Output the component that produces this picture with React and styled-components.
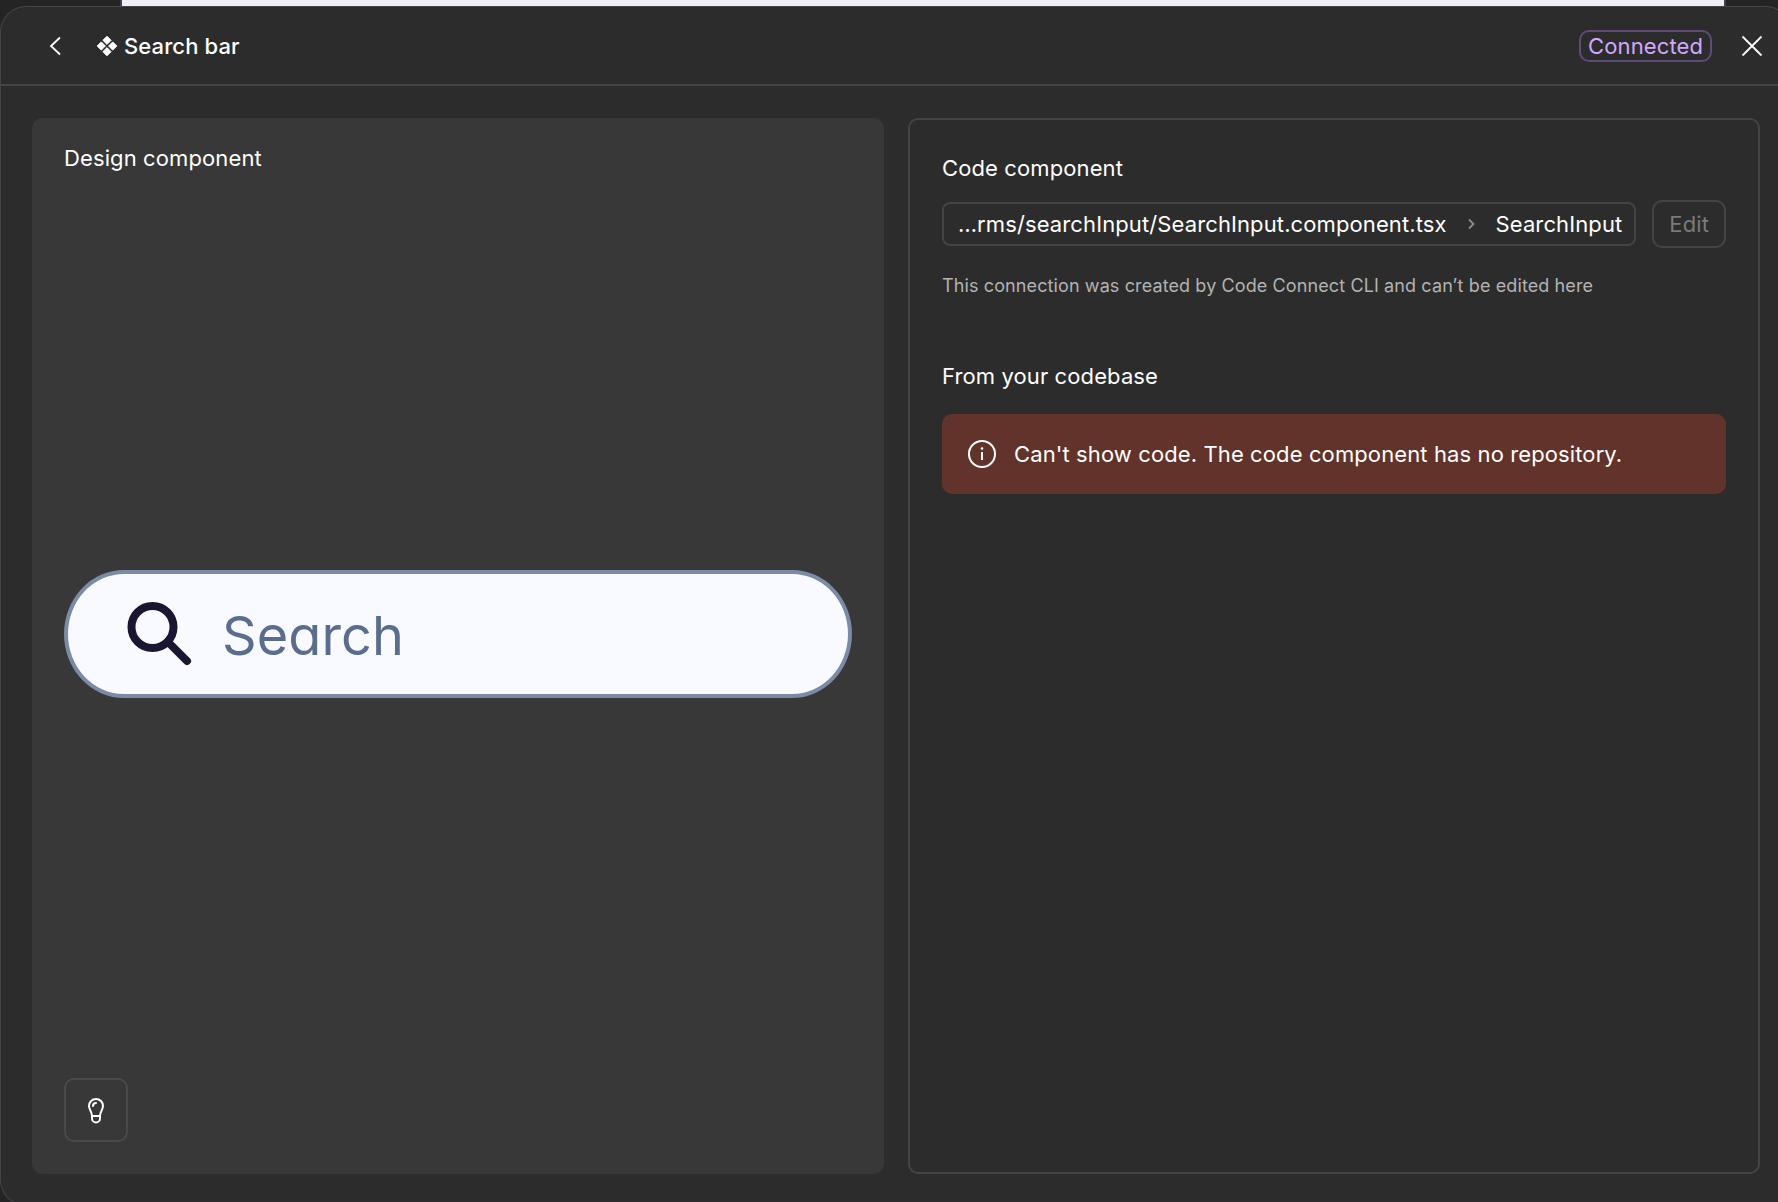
import React from "react";
import styled, { createGlobalStyle } from "styled-components";

const GlobalStyle = createGlobalStyle`
  *, *::before, *::after { box-sizing: border-box; }
  html, body, #root { height: 100%; }
  body {
    margin: 0;
    overflow: hidden;
    background: #1e1e1e;
    color: #ffffff;
    font-family: Inter, "Liberation Sans", sans-serif;
    font-size: 22px;
    line-height: 32px;
    letter-spacing: 0.005em;
  }
  button, input { font: inherit; letter-spacing: inherit; margin: 0; }
  h1, h2, p { margin: 0; font-size: inherit; font-weight: 400; }
`;

const Page = styled.div`
  display: flex;
  flex-direction: column;
  height: 100%;
  background: #242424;
`;

const CanvasStrip = styled.div`
  flex: none;
  height: 6px;
  margin: 0 52px 0 120px;
  background: #f0eff7;
  border: solid #444444;
  border-width: 0 2px;
`;

/* The dialog runs slightly past the right and bottom edges of the window. */
const Dialog = styled.section`
  flex: 1;
  display: flex;
  flex-direction: column;
  margin: 0 -14px -4px 0;
  background: #2c2c2c;
  border-radius: 26px;
  box-shadow: inset 0 0 0 1px #444444;
`;

const Header = styled.header`
  flex: none;
  display: flex;
  align-items: center;
  height: 80px;
  padding: 2px 16px 0 32px;
  border-bottom: 2px solid #444444;
`;

const IconButton = styled.button`
  display: grid;
  place-items: center;
  width: 48px;
  height: 48px;
  padding: 0;
  border: 0;
  border-radius: 10px;
  background: none;
  color: #ffffff;
`;

const Title = styled.h1`
  display: flex;
  align-items: center;
  gap: 6px;
  flex: 1;
  margin-left: 16px;

  && { font-weight: 500; }
`;

const Badge = styled.span`
  height: 32px;
  margin-right: 16px;
  padding: 0 7px;
  border: 2px solid #5e4b76;
  border-radius: 10px;
  color: #d1a8ff;
  line-height: 28px;
`;

const Columns = styled.div`
  flex: 1;
  display: grid;
  grid-template-columns: repeat(2, minmax(0, 1fr));
  gap: 24px;
  padding: 32px;
`;

const DesignPanel = styled.section`
  display: flex;
  flex-direction: column;
  justify-content: space-between;
  padding: 24px 32px 32px;
  border-radius: 10px;
  background: #383838;
`;

const DesignTitle = styled.h2`
  && { margin-bottom: 16px; }
`;

const SearchPreview = styled.label`
  display: flex;
  align-items: center;
  gap: 28px;
  height: 128px;
  padding: 0 58px;
  border: 4px solid #7b8aa5;
  border-radius: 60px / 64px;
  background: #f9faff;
`;

const SearchField = styled.input`
  flex: 1;
  min-width: 0;
  padding: 4px 0 0;
  border: 0;
  outline: 0;
  background: none;
  color: #5a6d8c;
  font-size: 54px;
  line-height: 64px;
  font-feature-settings: "cv11";

  &::placeholder { color: #5a6d8c; opacity: 1; }
`;

const HintButton = styled(IconButton)`
  width: 64px;
  height: 64px;
  border: 2px solid #4a4a4a;
`;

const CodePanel = styled.section`
  padding: 32px;
  border: 2px solid #444444;
  border-radius: 10px;
`;

const ConnectionRow = styled.div`
  display: flex;
  align-items: center;
  gap: 16px;
  margin: 16px 0 24px;
`;

const PathBox = styled.div`
  flex: 1;
  display: flex;
  align-items: center;
  justify-content: space-between;
  height: 44px;
  padding: 0 12px 0 14px;
  border: 2px solid #444444;
  border-radius: 8px;
  white-space: nowrap;
`;

const EditButton = styled.button`
  height: 48px;
  padding: 0 15px;
  border: 2px solid #444444;
  border-radius: 10px;
  background: none;
  color: #7a7a7a;
`;

const Note = styled.p`
  color: #b3b3b3;
  font-size: 18px;
  line-height: 28px;
`;

const CodebaseTitle = styled.h2`
  && { margin: 60px 0 22px; }
`;

const Alert = styled.div`
  display: flex;
  align-items: center;
  gap: 16px;
  height: 80px;
  padding: 0 24px;
  border-radius: 10px;
  background: #61332b;
`;

export default function App() {
  return (
    <>
      <GlobalStyle />
      <Page>
        <CanvasStrip />
        <Dialog aria-label="Search bar">
          <Header>
            <IconButton aria-label="Back">
              <svg width="20" height="24" viewBox="0 0 20 24" fill="none" stroke="currentColor" strokeWidth="1.8">
                <path d="M14 3.500L5 12l9 8.500" />
              </svg>
            </IconButton>
            <Title>
              <svg width="22" height="22" viewBox="0 0 22 22" fill="currentColor" stroke="currentColor" strokeWidth="1" strokeLinejoin="round">
                <path d="M11 1.2L15.1 5.3 11 9.4 6.9 5.3zM16.7 6.9L20.8 11l-4.1 4.1-4.1-4.1zM5.3 6.9L9.4 11l-4.1 4.1L1.2 11zM11 12.6l4.1 4.1L11 20.8l-4.1-4.1z" />
              </svg>
              Search bar
            </Title>
            <Badge>Connected</Badge>
            <IconButton aria-label="Close">
              <svg width="22" height="22" viewBox="0 0 22 22" fill="none" stroke="currentColor" strokeWidth="1.8">
                <path d="M1.5 1.5l19 19M20.5 1.5l-19 19" />
              </svg>
            </IconButton>
          </Header>
          <Columns>
            <DesignPanel>
              <DesignTitle>Design component</DesignTitle>
              <SearchPreview>
                <svg width="68" height="68" viewBox="0 0 68 68" fill="none" stroke="#1a1530" strokeWidth="8" strokeLinecap="round" aria-hidden="true">
                  <circle cx="26.5" cy="27" r="21" />
                  <path d="M42 42L61 61" />
                </svg>
                <SearchField type="search" placeholder="Search" aria-label="Search" />
              </SearchPreview>
              <HintButton aria-label="Show hints">
                <svg width="18" height="28" viewBox="0 0 18 28" fill="none" stroke="currentColor" strokeWidth="2" strokeLinejoin="round" strokeLinecap="round">
                  <path d="M5 20C5 16 2 13.5 2 10a7 7 0 0 1 14 0c0 3.5-3 6-3 10z" />
                  <path d="M5 20v2.5a4 4 0 0 0 8 0V20M6 10a3 3 0 0 1 3-3" />
                </svg>
              </HintButton>
            </DesignPanel>
            <CodePanel>
              <h2>Code component</h2>
              <ConnectionRow>
                <PathBox>
                  <span>…rms/searchInput/SearchInput.component.tsx</span>
                  <svg width="12" height="16" viewBox="0 0 12 16" fill="none" stroke="#8c8c8c" strokeWidth="1.8">
                    <path d="M4 3.500L8.500 8 4 12.500" />
                  </svg>
                  <span>SearchInput</span>
                </PathBox>
                <EditButton disabled>Edit</EditButton>
              </ConnectionRow>
              <Note>This connection was created by Code Connect CLI and can’t be edited here</Note>
              <CodebaseTitle>From your codebase</CodebaseTitle>
              <Alert role="alert">
                <svg width="32" height="32" viewBox="0 0 32 32" fill="none" stroke="currentColor" strokeWidth="2">
                  <circle cx="16" cy="16" r="13" />
                  <path d="M16 14v8" />
                  <circle cx="16" cy="10.5" r="1.3" fill="currentColor" stroke="none" />
                </svg>
                <p>Can't show code. The code component has no repository.</p>
              </Alert>
            </CodePanel>
          </Columns>
        </Dialog>
      </Page>
    </>
  );
}
